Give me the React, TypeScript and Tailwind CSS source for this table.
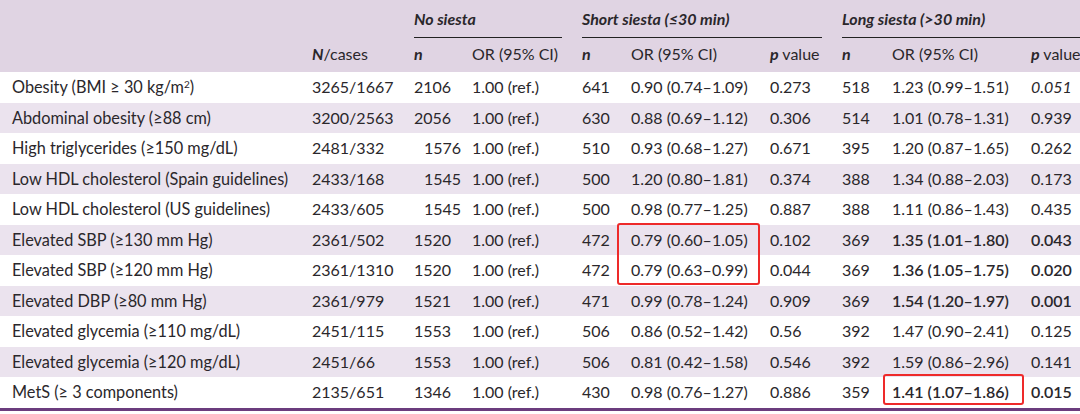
import React from "react";

type Row = {
  label: React.ReactNode;
  cases: string;
  n0: string;
  n1: string;
  or1: string;
  p1: string;
  n2: string;
  or2: string;
  p2: string;
  bold?: boolean;
  shiftN0?: boolean;
  italicP2?: boolean;
};

const ROWS: Row[] = [
  {
    label: (
      <>
        Obesity (BMI ≥ 30 kg/m<sup className="text-[10px]">2</sup>)
      </>
    ),
    cases: "3265/1667",
    n0: "2106",
    n1: "641",
    or1: "0.90 (0.74–1.09)",
    p1: "0.273",
    n2: "518",
    or2: "1.23 (0.99–1.51)",
    p2: "0.051",
    italicP2: true,
  },
  { label: "Abdominal obesity (≥88 cm)", cases: "3200/2563", n0: "2056", n1: "630", or1: "0.88 (0.69–1.12)", p1: "0.306", n2: "514", or2: "1.01 (0.78–1.31)", p2: "0.939" },
  { label: "High triglycerides (≥150 mg/dL)", cases: "2481/332", n0: "1576", n1: "510", or1: "0.93 (0.68–1.27)", p1: "0.671", n2: "395", or2: "1.20 (0.87–1.65)", p2: "0.262", shiftN0: true },
  { label: "Low HDL cholesterol (Spain guidelines)", cases: "2433/168", n0: "1545", n1: "500", or1: "1.20 (0.80–1.81)", p1: "0.374", n2: "388", or2: "1.34 (0.88–2.03)", p2: "0.173", shiftN0: true },
  { label: "Low HDL cholesterol (US guidelines)", cases: "2433/605", n0: "1545", n1: "500", or1: "0.98 (0.77–1.25)", p1: "0.887", n2: "388", or2: "1.11 (0.86–1.43)", p2: "0.435", shiftN0: true },
  { label: "Elevated SBP (≥130 mm Hg)", cases: "2361/502", n0: "1520", n1: "472", or1: "0.79 (0.60–1.05)", p1: "0.102", n2: "369", or2: "1.35 (1.01–1.80)", p2: "0.043", bold: true },
  { label: "Elevated SBP (≥120 mm Hg)", cases: "2361/1310", n0: "1520", n1: "472", or1: "0.79 (0.63–0.99)", p1: "0.044", n2: "369", or2: "1.36 (1.05–1.75)", p2: "0.020", bold: true },
  { label: "Elevated DBP (≥80 mm Hg)", cases: "2361/979", n0: "1521", n1: "471", or1: "0.99 (0.78–1.24)", p1: "0.909", n2: "369", or2: "1.54 (1.20–1.97)", p2: "0.001", bold: true },
  { label: "Elevated glycemia (≥110 mg/dL)", cases: "2451/115", n0: "1553", n1: "506", or1: "0.86 (0.52–1.42)", p1: "0.56", n2: "392", or2: "1.47 (0.90–2.41)", p2: "0.125" },
  { label: "Elevated glycemia (≥120 mg/dL)", cases: "2451/66", n0: "1553", n1: "506", or1: "0.81 (0.42–1.58)", p1: "0.546", n2: "392", or2: "1.59 (0.86–2.96)", p2: "0.141" },
  { label: "MetS (≥ 3 components)", cases: "2135/651", n0: "1346", n1: "430", or1: "0.98 (0.76–1.27)", p1: "0.886", n2: "359", or2: "1.41 (1.07–1.86)", p2: "0.015", bold: true },
];

const COLS =
  "grid grid-cols-[312px_102px_58px_110px_49px_139px_72px_50px_139px_60px]";

const App = () => {
  return (
    <div className="relative w-[1080px] h-[414px] overflow-hidden bg-white font-[Lato,sans-serif] text-[16px] tabular-nums text-[#2a272b] leading-none">
      {/* Header */}
      <div className="bg-[#e0d4e3]">
        <div className={`${COLS} h-[38px]`}>
          <div />
          <div />
          <div className="col-span-2 mr-5 flex items-center border-b-[1.5px] border-[#222] font-bold italic">
            No siesta
          </div>
          <div className="col-span-3 mr-5 flex items-center border-b-[1.5px] border-[#222] font-bold italic">
            Short siesta (≤30 min)
          </div>
          <div className="col-span-3 flex items-center border-b-[1.5px] border-[#222] font-bold italic">
            Long siesta (&gt;30 min)
          </div>
        </div>
        <div className={`${COLS} h-[34px] items-center pb-0.5 whitespace-nowrap`}>
          <div />
          <div>
            <span className="font-bold italic">N</span>/cases
          </div>
          <div className="font-bold italic">n</div>
          <div>OR (95% CI)</div>
          <div className="font-bold italic">n</div>
          <div>OR (95% CI)</div>
          <div>
            <span className="font-bold italic">p</span> value
          </div>
          <div className="font-bold italic">n</div>
          <div>OR (95% CI)</div>
          <div>
            <span className="font-bold italic">p</span> value
          </div>
        </div>
      </div>

      {/* Body */}
      <div className="border-b-[3px] border-[#6b3c7e]">
        {ROWS.map((row, i) => (
          <div
            key={i}
            className={`${COLS} h-[30.5px] items-center whitespace-nowrap ${
              i % 2 === 1 ? "bg-[#ebe3ee]" : "bg-white"
            }`}
          >
            <div className="pl-3 text-[16.3px]">{row.label}</div>
            <div>{row.cases}</div>
            <div className={row.shiftN0 ? "pl-[10px]" : ""}>{row.n0}</div>
            <div>1.00 (ref.)</div>
            <div>{row.n1}</div>
            <div>{row.or1}</div>
            <div>{row.p1}</div>
            <div>{row.n2}</div>
            <div className={row.bold ? "font-semibold" : ""}>{row.or2}</div>
            <div
              className={`${row.bold ? "font-semibold" : ""} ${
                row.italicP2 ? "italic" : ""
              }`}
            >
              {row.p2}
            </div>
          </div>
        ))}
      </div>

      {/* Red highlight boxes */}
      <div className="pointer-events-none absolute left-[617px] top-[223px] h-[62px] w-[143px] rounded-[3px] border-2 border-[#ee2a2a]" />
      <div className="pointer-events-none absolute left-[883px] top-[374px] h-[31px] w-[141px] rounded-[3px] border-2 border-[#ee2a2a]" />
    </div>
  );
};

export default App;
